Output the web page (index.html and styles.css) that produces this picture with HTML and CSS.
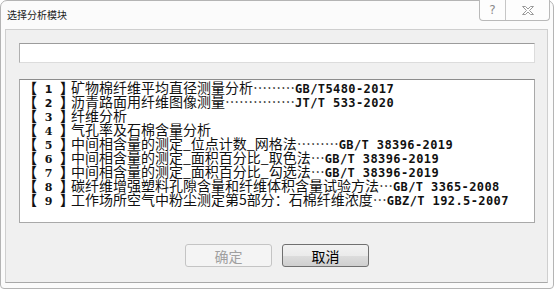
FILE: index.html
```html
<!DOCTYPE html>
<html lang="zh-CN">
<head>
    <meta charset="UTF-8">
    <title>选择分析模块</title>
    <link rel="stylesheet" href="styles.css">
</head>
<body>
    <div class="window">
        <!-- Title bar -->
        <div class="titlebar">
            <span class="title">选择分析模块</span>
            <div class="caption-btns">
                <span class="cap-btn help">?</span>
                <span class="cap-btn close">
                    <svg width="14" height="11" viewBox="0 0 14 11">
                        <path d="M1.5 1.5h3l2.5 2.5 2.5-2.5h3l-4 4 4 4h-3l-2.5-2.5-2.5 2.5h-3l4-4z" fill="#fff" stroke="#9a9a9a" stroke-width="1" stroke-linejoin="round"/>
                    </svg>
                </span>
            </div>
        </div>

        <div class="panel">
            <div class="search"></div>

            <ul class="list">
                <li><span class="idx"><i>【</i><b class="sans">1</b><i>】</i></span>矿物棉纤维平均直径测量分析………<span class="code">GB/T5480-2017</span></li>
                <li><span class="idx"><i>【</i><b class="sans">2</b><i>】</i></span>沥青路面用纤维图像测量……………<span class="code">JT/T 533-2020</span></li>
                <li><span class="idx"><i>【</i><b>3</b><i>】</i></span>纤维分析</li>
                <li><span class="idx"><i>【</i><b>4</b><i>】</i></span>气孔率及石棉含量分析</li>
                <li><span class="idx"><i>【</i><b>5</b><i>】</i></span>中间相含量的测定_位点计数_网格法………<span class="code">GB/T 38396-2019</span></li>
                <li><span class="idx"><i>【</i><b>6</b><i>】</i></span>中间相含量的测定_面积百分比_取色法…<span class="code">GB/T 38396-2019</span></li>
                <li><span class="idx"><i>【</i><b>7</b><i>】</i></span>中间相含量的测定_面积百分比_勾选法…<span class="code">GB/T 38396-2019</span></li>
                <li><span class="idx"><i>【</i><b>8</b><i>】</i></span>碳纤维增强塑料孔隙含量和纤维体积含量试验方法…<span class="code">GB/T 3365-2008</span></li>
                <li><span class="idx"><i>【</i><b>9</b><i>】</i></span>工作场所空气中粉尘测定第5部分：石棉纤维浓度…<span class="code">GBZ/T 192.5-2007</span></li>
            </ul>

            <div class="actions">
                <button class="btn" disabled>确定</button>
                <button class="btn primary">取消</button>
            </div>
        </div>
    </div>
</body>
</html>
```

FILE: styles.css
```css
* {
    margin: 0;
    padding: 0;
    box-sizing: border-box;
}

body {
    width: 554px;
    height: 290px;
    background: #ffffff;
    font-family: "Noto Sans CJK SC", "DejaVu Sans", sans-serif;
    overflow: hidden;
}

.window {
    width: 554px;
    height: 289px;
    border: 1px solid #b4b4b4;
    border-radius: 7px 7px 4px 4px;
    background: #fbfbfb;
}

/* Title bar */
.titlebar {
    height: 28px;
    display: flex;
    justify-content: space-between;
    align-items: flex-start;
}

.title {
    padding: 7px 0 0 6px;
    font-size: 10px;
    line-height: 14px;
    color: #222;
}

.caption-btns {
    display: flex;
    margin: -1px 3px 0 0;
    height: 21px;
    border: 1px solid #b9b9b9;
    border-top: none;
    border-radius: 0 0 4px 4px;
    background: #fdfdfd;
}

.cap-btn {
    display: flex;
    align-items: center;
    justify-content: center;
    height: 20px;
}

.cap-btn.help {
    width: 26px;
    border-right: 1px solid #c6c6c6;
    font-family: "DejaVu Sans", sans-serif;
    font-size: 12px;
    color: #8a8a8a;
}

.cap-btn.close {
    width: 43px;
}

/* Main panel */
.panel {
    margin: 0 5px 0 4px;
    height: 254px;
    background: #f0f0f0;
    border: 1px solid #cfcfcf;
    border-bottom-color: #a8a8a8;
    padding: 13px 12px 0 13px;
}

.search {
    height: 20px;
    background: #fff;
    border: 1px solid #dcdcdc;
    border-top-color: #9c9c9c;
    border-left-color: #b0b0b0;
}

.list {
    list-style: none;
    margin-top: 16px;
    height: 144px;
    background: #fff;
    border: 1px solid #a9a9a9;
    border-top-color: #8c8c8c;
    padding: 0 0 0 3px;
    font-size: 14px;
    line-height: 14px;
    color: #111;
    white-space: nowrap;
}

.list li {
    height: 14px;
}

.idx {
    display: inline-flex;
    justify-content: space-between;
    align-items: baseline;
    width: 51px;
    margin-right: -3px;
}

.idx i {
    font-style: normal;
    font-weight: bold;
}

.idx b {
    font-family: "DejaVu Serif", serif;
    font-size: 11px;
    font-weight: bold;
}

.idx b.sans {
    font-family: "DejaVu Sans", sans-serif;
}

.code {
    font-family: "DejaVu Sans Mono", monospace;
    font-weight: bold;
    font-size: 12px;
    letter-spacing: 0.4px;
}

/* Buttons */
.actions {
    display: flex;
    justify-content: center;
    gap: 10px;
    margin-top: 21px;
}

.btn {
    width: 87px;
    height: 23px;
    border: 1px solid #707070;
    border-radius: 3px;
    background: linear-gradient(#f2f2f2 0%, #ebebeb 50%, #dddddd 51%, #cfcfcf 100%);
    font-family: "Noto Sans CJK SC", sans-serif;
    font-size: 14px;
    color: #000;
}

.btn:disabled {
    border-color: #c4c4c4;
    background: #f4f4f4;
    color: #a0a0a0;
}
```
